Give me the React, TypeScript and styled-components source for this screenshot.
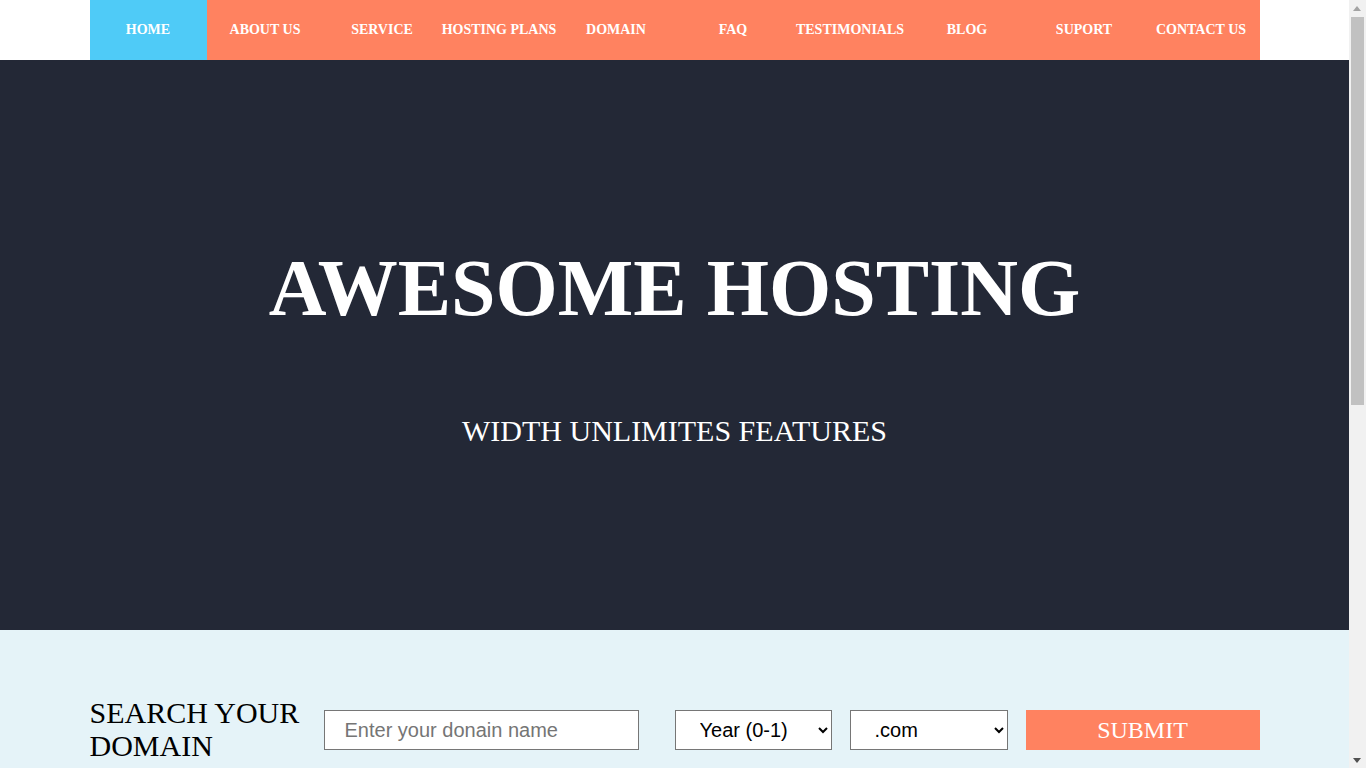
import React from "react";
import styled, { createGlobalStyle } from "styled-components";

const Global = createGlobalStyle`
  html, body { margin: 0; padding: 0; }
  body { font-family: "Liberation Serif", "Times New Roman", serif; background: #fff; }
  * { box-sizing: border-box; }
`;

const Page = styled.div`
  width: calc(100% - 17px);
`;

const ScrollTrack = styled.div`
  position: fixed;
  top: 0;
  right: 0;
  width: 17px;
  height: 100vh;
  background: #f1f1f1;
  z-index: 10;
`;

const ScrollThumb = styled.div`
  position: absolute;
  top: 17px;
  left: 2px;
  width: 13px;
  height: 388px;
  background: #c1c1c1;
`;

const ScrollArrow = styled.div<{ $down?: boolean }>`
  position: absolute;
  left: 4px;
  width: 0;
  height: 0;
  border-left: 4.5px solid transparent;
  border-right: 4.5px solid transparent;
  ${(p) =>
    p.$down
      ? "bottom: 5px; border-top: 5px solid #505050;"
      : "top: 6px; border-bottom: 5px solid #a3a3a3;"}
`;

const NavBar = styled.nav`
  background: #fff;
`;

const NavInner = styled.ul`
  width: 1170px;
  margin: 0 auto;
  padding: 0;
  list-style: none;
  display: grid;
  grid-template-columns: repeat(10, 1fr);
  background: #ff8260;
`;

const NavItem = styled.li<{ $active?: boolean }>`
  height: 60px;
  line-height: 59px;
  text-align: center;
  font-size: 14px;
  font-weight: bold;
  color: #fff;
  text-transform: uppercase;
  white-space: nowrap;
  background: ${(p) => (p.$active ? "#4fcbf7" : "transparent")};
`;

const Hero = styled.section`
  background: #232836;
  height: 570px;
  padding-top: 188px;
  text-align: center;
  color: #fff;
`;

const Title = styled.h1`
  margin: 0;
  font-size: 80px;
  line-height: 1;
  font-weight: bold;
`;

const Subtitle = styled.h2`
  margin: 88px 0 0;
  font-size: 30px;
  line-height: 1;
  font-weight: normal;
`;

const SearchSection = styled.section`
  background: #e5f3f8;
  min-height: 820px;
  padding-top: 67px;
`;

const SearchRow = styled.form`
  width: 1170px;
  margin: 0 auto;
  display: flex;
  align-items: center;
`;

const SearchHeading = styled.h3`
  width: 234px;
  margin: -1px 0 1px;
  font-size: 30px;
  line-height: 33px;
  font-weight: normal;
  color: #000;
`;

const Field = styled.input`
  width: 315px;
  height: 40px;
  border: 1px solid #767676;
  border-radius: 0;
  padding: 0 20px;
  font-family: "Liberation Sans", Arial, sans-serif;
  font-size: 20px;
  background: #fff;
  &::placeholder { color: #757575; }
`;

const Select = styled.select<{ $w: number; $gap: number }>`
  width: ${(p) => p.$w}px;
  height: 40px;
  margin-left: ${(p) => p.$gap}px;
  border: 1px solid #767676;
  border-radius: 0;
  padding: 0 4px 0 20px;
  font-family: "Liberation Sans", Arial, sans-serif;
  font-size: 20px;
  color: #000;
  background: #fff;
`;

const Submit = styled.button`
  width: 234px;
  height: 40px;
  margin-left: 18px;
  border: none;
  background: #ff8260;
  color: #fff;
  font-family: "Liberation Serif", "Times New Roman", serif;
  font-size: 24px;
  padding: 0;
`;

const items = [
  "Home",
  "About us",
  "Service",
  "Hosting plans",
  "Domain",
  "FAQ",
  "Testimonials",
  "Blog",
  "Suport",
  "Contact us",
];

export default function App() {
  return (
    <>
      <Global />
      <Page>
        <NavBar>
          <NavInner>
            {items.map((t, i) => (
              <NavItem key={t} $active={i === 0}>
                {t}
              </NavItem>
            ))}
          </NavInner>
        </NavBar>
        <Hero>
          <Title>AWESOME HOSTING</Title>
          <Subtitle>WIDTH UNLIMITES FEATURES</Subtitle>
        </Hero>
        <SearchSection>
          <SearchRow onSubmit={(e) => e.preventDefault()}>
            <SearchHeading>SEARCH YOUR DOMAIN</SearchHeading>
            <Field placeholder="Enter your donain name" />
            <Select $w={157} $gap={36} defaultValue="1">
              <option value="1">Year (0-1)</option>
              <option value="2">Year (1-2)</option>
            </Select>
            <Select $w={158} $gap={18} defaultValue="com">
              <option value="com">.com</option>
              <option value="net">.net</option>
            </Select>
            <Submit type="submit">SUBMIT</Submit>
          </SearchRow>
        </SearchSection>
      </Page>
      <ScrollTrack aria-hidden>
        <ScrollArrow />
        <ScrollThumb />
        <ScrollArrow $down />
      </ScrollTrack>
    </>
  );
}
